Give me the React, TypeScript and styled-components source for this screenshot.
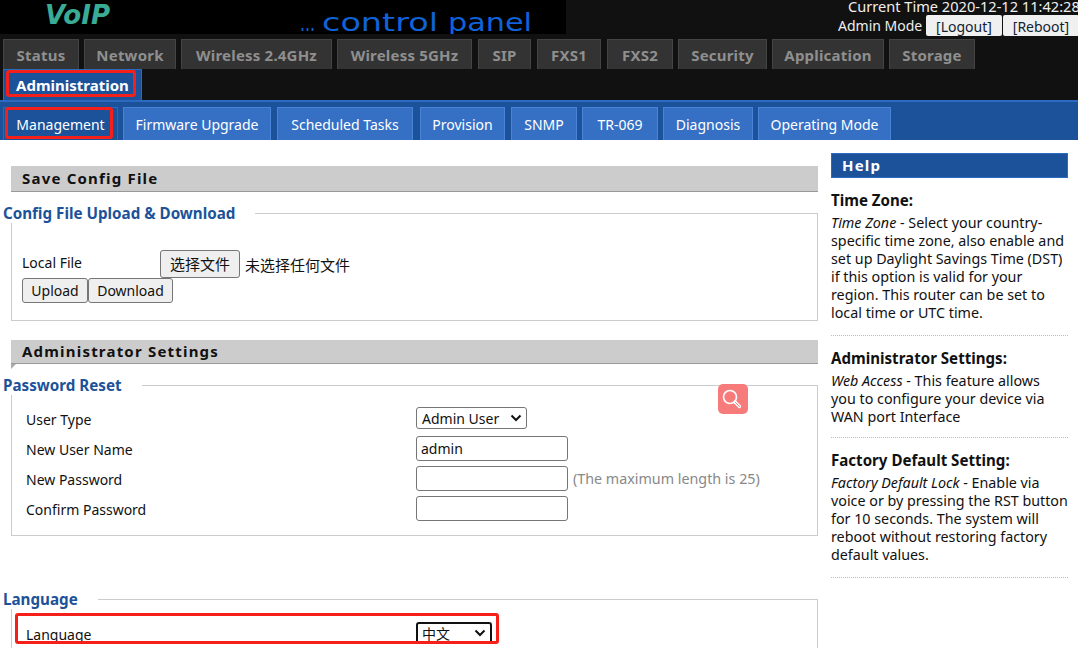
import React from "react";
import styled, { createGlobalStyle } from "styled-components";

const Global = createGlobalStyle`
  html, body { margin: 0; padding: 0; height: 648px; overflow: hidden; background: #fff; }
  body { font-family: "Noto Sans", "Noto Sans CJK SC", sans-serif; font-size: 14px; color: #111; }
  * { box-sizing: border-box; }
`;

const Page = styled.div`
  width: 1078px;
  height: 648px;
  overflow: hidden;
  position: relative;
`;
const Header = styled.header`
  height: 100px;
  background: #111;
`;
const TopBar = styled.div`
  height: 39px;
  display: flex;
  justify-content: space-between;
`;
const Logo = styled.svg`
  width: 566px;
  height: 34px;
  background: #000;
  display: block;
  flex: none;
`;
const Status = styled.div`
  width: 240px;
  margin-top: -2px;
  color: #eee;
  white-space: nowrap;
  line-height: 16px;
  flex: none;
  overflow: hidden;
`;
const Clock = styled.div`
  padding-left: 10px;
  font-size: 14.6px;
`;
const ModeRow = styled.div`
  display: flex;
  align-items: center;
  height: 24px;
  margin-top: -1px;
`;
const ModeLabel = styled.span`
  width: 88px;
  flex: none;
  padding-top: 2px;
`;
const HeadButton = styled.span<{ $w: number }>`
  width: ${(p) => p.$w}px;
  flex: none;
  height: 21px;
  margin-right: 1px;
  background: #f0f0f0;
  color: #123;
  text-align: center;
  line-height: 23px;
  border-radius: 2px;
`;
const MainTabs = styled.nav`
  display: flex;
  flex-wrap: wrap;
  padding-left: 3px;
  width: 1000px;
`;
const MainTab = styled.div<{ $w: number; $gap?: number; $active?: boolean }>`
  position: relative;
  width: ${(p) => p.$w}px;
  height: ${(p) => (p.$active ? 31 : 30)}px;
  margin-right: ${(p) => p.$gap ?? 5}px;
  background: ${(p) => (p.$active ? "#1c5299" : "#333")};
  border: 1px solid ${(p) => (p.$active ? "#2b6ac0" : "#444")};
  border-bottom: none;
  color: ${(p) => (p.$active ? "#fff" : "#8f8f8f")};
  font-weight: 700;
  font-size: 15px;
  letter-spacing: ${(p) => (p.$active ? 0 : 0.2)}px;
  white-space: nowrap;
  text-align: center;
  line-height: 31px;
`;
const SubBar = styled.nav`
  height: 40px;
  background: #1c5299;
  border-top: 2px solid #2b6ac0;
  display: flex;
  align-items: flex-end;
  padding-left: 3px;
`;
const SubTab = styled.div<{ $w: number; $gap?: number; $active?: boolean }>`
  position: relative;
  width: ${(p) => p.$w}px;
  height: 33px;
  margin-right: ${(p) => p.$gap ?? 5}px;
  background: ${(p) => (p.$active ? "#1c5299" : "#3570c5")};
  border: 1px solid ${(p) => (p.$active ? "#2b6ac0" : "#4a84d8")};
  border-bottom: none;
  color: #fff;
  text-align: center;
  line-height: 34px;
`;
const RedBox = styled.span<{ $l: number; $t: number; $w: number; $h: number }>`
  position: absolute;
  left: ${(p) => p.$l}px;
  top: ${(p) => p.$t}px;
  width: ${(p) => p.$w}px;
  height: ${(p) => p.$h}px;
  border: 3px solid #f5201a;
  border-radius: 3px;
  pointer-events: none;
`;
const Body = styled.div`
  display: flex;
  align-items: flex-start;
  padding-left: 11px;
  gap: 13px;
`;
const Content = styled.main`
  width: 807px;
  flex: none;
  padding-top: 26px;
`;
const SectionBar = styled.h2<{ $mt?: number; $h: number }>`
  margin: ${(p) => p.$mt ?? 0}px 0 0;
  height: ${(p) => p.$h}px;
  position: relative;
  background: #ccc;
  border-bottom: 1px solid #999;
  padding-left: 11px;
  font-size: 15px;
  font-weight: 700;
  letter-spacing: 1.2px;
  line-height: ${(p) => p.$h - 1}px;
  color: #111;
`;
const Corner = styled.span`
  position: absolute;
  left: 0;
  top: 24px;
  border-top: 5px solid #aaa;
  border-right: 5px solid transparent;
`;
const Group = styled.fieldset<{ $mt: number; $h: number }>`
  margin: ${(p) => p.$mt}px 0 0;
  height: ${(p) => p.$h}px;
  min-width: 0;
  border: 1px solid #ccc;
  padding: 0 0 0 10px;
  position: relative;
`;
const Legend = styled.legend`
  margin-left: -19px;
  padding: 0 20px 0 0;
  color: #1c5299;
  font-weight: 700;
  font-size: 15.2px;
  line-height: 20px;
`;
const FileRow = styled.div`
  display: flex;
  align-items: center;
  height: 28px;
  margin-top: 27px;
`;
const FileLabel = styled.span`
  width: 138px;
  margin-top: -3px;
  flex: none;
`;
const NativeButton = styled.span<{ $w: number; $h: number; $size?: number }>`
  display: inline-block;
  width: ${(p) => p.$w}px;
  height: ${(p) => p.$h}px;
  background: #efefef;
  border: 1px solid #767676;
  border-radius: 3px;
  text-align: center;
  font-size: ${(p) => p.$size ?? 14}px;
  line-height: ${(p) => p.$h - 1}px;
  color: #111;
`;
const FileName = styled.span`
  margin-left: 5px;
  font-size: 15px;
`;
const ButtonRow = styled.div`
  display: flex;
`;
const FormRow = styled.div<{ $h: number }>`
  display: flex;
  align-items: center;
  height: ${(p) => p.$h}px;
  padding-left: 4px;
`;
const RowGroup = styled.div<{ $pt: number }>`
  padding-top: ${(p) => p.$pt}px;
`;
const RowLabel = styled.label`
  width: 390px;
  flex: none;
  padding-top: 2px;
`;
const FakeSelect = styled.div<{ $w: number; $focus?: boolean }>`
  width: ${(p) => p.$w}px;
  height: 22px;
  border: ${(p) => (p.$focus ? "2px solid #111" : "1px solid #767676")};
  border-radius: 3px;
  padding-left: ${(p) => (p.$focus ? 4 : 5)}px;
  display: flex;
  align-items: center;
  justify-content: space-between;
  background: #fff;
`;
const Chevron = styled.svg`
  width: 12px;
  height: 8px;
  margin-right: 4px;
  flex: none;
`;
const TextBox = styled.div`
  width: 152px;
  height: 25px;
  border: 1px solid #767676;
  border-radius: 3px;
  padding-left: 4px;
  line-height: 24px;
  background: #fff;
`;
const Hint = styled.span`
  margin-left: 5px;
  color: #888;
  font-size: 14.3px;
`;
const SearchBadge = styled.div`
  position: absolute;
  left: 718px;
  top: 384px;
  width: 30px;
  height: 30px;
  background: #f87b7b;
  border-radius: 5px;
  display: flex;
  align-items: center;
  justify-content: center;
`;
const Help = styled.aside`
  width: 237px;
  flex: none;
  padding-top: 13px;
`;
const HelpBar = styled.h2`
  margin: 0;
  height: 25px;
  background: #1c5299;
  border: 1px solid #2b6ac0;
  padding-left: 10px;
  color: #fff;
  font-size: 15px;
  font-weight: 700;
  letter-spacing: 1.2px;
  line-height: 22px;
`;
const HelpItem = styled.section<{ $pt: number; $pb: number }>`
  padding: ${(p) => p.$pt}px 0 ${(p) => p.$pb}px;
  border-bottom: 1px dotted #bbb;
`;
const HelpTitle = styled.h3`
  margin: 0 0 5px;
  font-size: 15.1px;
  font-weight: 700;
  line-height: 18px;
  color: #111;
`;
const HelpText = styled.p`
  margin: 0;
  font-size: 14.3px;
  line-height: 18px;
  white-space: nowrap;
`;

const mainTabs: [string, number, number?][] = [
  ["Status", 76], ["Network", 92], ["Wireless 2.4GHz", 151], ["Wireless 5GHz", 135, 6],
  ["SIP", 53, 6], ["FXS1", 64, 6], ["FXS2", 66], ["Security", 89], ["Application", 112], ["Storage", 86],
];
const subTabs: [string, number, number?][] = [
  ["Firmware Upgrade", 148, 6], ["Scheduled Tasks", 136, 7], ["Provision", 85, 6],
  ["SNMP", 66], ["TR-069", 76, 5], ["Diagnosis", 90, 5], ["Operating Mode", 133],
];

const Caret = () => (
  <Chevron viewBox="0 0 12 8">
    <path d="M1.5 1.5 L6 6 L10.5 1.5" fill="none" stroke="#111" strokeWidth="2" />
  </Chevron>
);

export default function App() {
  return (
    <Page>
      <Global />
      <Header>
        <TopBar>
          <Logo viewBox="0 0 566 34">
            <text x="45" y="24" fill="#3aab95" fontFamily="DejaVu Sans" fontStyle="italic" fontWeight="700" fontSize="26" textLength="65" lengthAdjust="spacingAndGlyphs">VoIP</text>
            <text x="300" y="31" fill="#0f62d8" fontFamily="DejaVu Sans" fontSize="24" textLength="15" lengthAdjust="spacingAndGlyphs">...</text>
            <text x="322" y="31" fill="#0f62d8" fontFamily="DejaVu Sans" fontSize="25" textLength="116" lengthAdjust="spacingAndGlyphs">control</text>
            <text x="448" y="31" fill="#0f62d8" fontFamily="DejaVu Sans" fontSize="25" textLength="84" lengthAdjust="spacingAndGlyphs">panel</text>
          </Logo>
          <Status>
            <Clock>Current Time 2020-12-12 11:42:28</Clock>
            <ModeRow>
              <ModeLabel>Admin Mode</ModeLabel>
              <HeadButton $w={76}>[Logout]</HeadButton>
              <HeadButton $w={76}>[Reboot]</HeadButton>
            </ModeRow>
          </Status>
        </TopBar>
        <MainTabs>
          {mainTabs.map(([t, w, g]) => (
            <MainTab key={t} $w={w} $gap={g}>{t}</MainTab>
          ))}
          <MainTab $w={139} $active>
            Administration
            <RedBox $l={2} $t={0} $w={130} $h={27} />
          </MainTab>
        </MainTabs>
      </Header>
      <SubBar>
        <SubTab $w={115} $active>
          Management
          <RedBox $l={1} $t={-1} $w={108} $h={32} />
        </SubTab>
        {subTabs.map(([t, w, g]) => (
          <SubTab key={t} $w={w} $gap={g}>{t}</SubTab>
        ))}
      </SubBar>
      <Body>
        <Content>
          <SectionBar $h={26}>Save Config File</SectionBar>
          <Group $mt={11} $h={118}>
            <Legend>Config File Upload &amp; Download</Legend>
            <FileRow>
              <FileLabel>Local File</FileLabel>
              <NativeButton $w={80} $h={28} $size={15}>选择文件</NativeButton>
              <FileName>未选择任何文件</FileName>
            </FileRow>
            <ButtonRow>
              <NativeButton $w={66} $h={25}>Upload</NativeButton>
              <NativeButton $w={85} $h={25}>Download</NativeButton>
            </ButtonRow>
          </Group>
          <SectionBar $mt={19} $h={24}>
            Administrator Settings
            <Corner />
          </SectionBar>
          <Group $mt={11} $h={161}>
            <Legend>Password Reset</Legend>
            <RowGroup $pt={8}>
              <FormRow $h={30}>
                <RowLabel>User Type</RowLabel>
                <FakeSelect $w={111}>Admin User<Caret /></FakeSelect>
              </FormRow>
              <FormRow $h={30}>
                <RowLabel>New User Name</RowLabel>
                <TextBox>admin</TextBox>
              </FormRow>
              <FormRow $h={30}>
                <RowLabel>New Password</RowLabel>
                <TextBox />
                <Hint>(The maximum length is 25)</Hint>
              </FormRow>
              <FormRow $h={30}>
                <RowLabel>Confirm Password</RowLabel>
                <TextBox />
              </FormRow>
            </RowGroup>
          </Group>
          <Group $mt={53} $h={80}>
            <Legend>Language</Legend>
            <RowGroup $pt={9}>
              <FormRow $h={30}>
                <RowLabel>Language</RowLabel>
                <FakeSelect $w={76} $focus>中文<Caret /></FakeSelect>
              </FormRow>
            </RowGroup>
            <RedBox $l={3} $t={4} $w={484} $h={31} />
          </Group>
        </Content>
        <Help>
          <HelpBar>Help</HelpBar>
          <HelpItem $pt={13} $pb={13}>
            <HelpTitle>Time Zone:</HelpTitle>
            <HelpText>
              <em>Time Zone</em> - Select your country-<br />
              specific time zone, also enable and<br />
              set up Daylight Savings Time (DST)<br />
              if this option is valid for your<br />
              region. This router can be set to<br />
              local time or UTC time.
            </HelpText>
          </HelpItem>
          <HelpItem $pt={13} $pb={11}>
            <HelpTitle>Administrator Settings:</HelpTitle>
            <HelpText>
              <em>Web Access</em> - This feature allows<br />
              you to configure your device via<br />
              WAN port Interface
            </HelpText>
          </HelpItem>
          <HelpItem $pt={13} $pb={13}>
            <HelpTitle>Factory Default Setting:</HelpTitle>
            <HelpText>
              <em>Factory Default Lock</em> - Enable via<br />
              voice or by pressing the RST button<br />
              for 10 seconds. The system will<br />
              reboot without restoring factory<br />
              default values.
            </HelpText>
          </HelpItem>
        </Help>
      </Body>
      <SearchBadge>
        <svg width="22" height="22" viewBox="0 0 22 22" fill="none" stroke="#fff">
          <circle cx="8" cy="9" r="6.5" strokeWidth="1.6" />
          <path d="M13 14 L17.5 18.5" strokeWidth="3.2" strokeLinecap="round" />
          <path d="M13.5 14.5 L17.5 18.5" strokeWidth="1" stroke="#f87b7b" strokeLinecap="round" />
        </svg>
      </SearchBadge>
    </Page>
  );
}
